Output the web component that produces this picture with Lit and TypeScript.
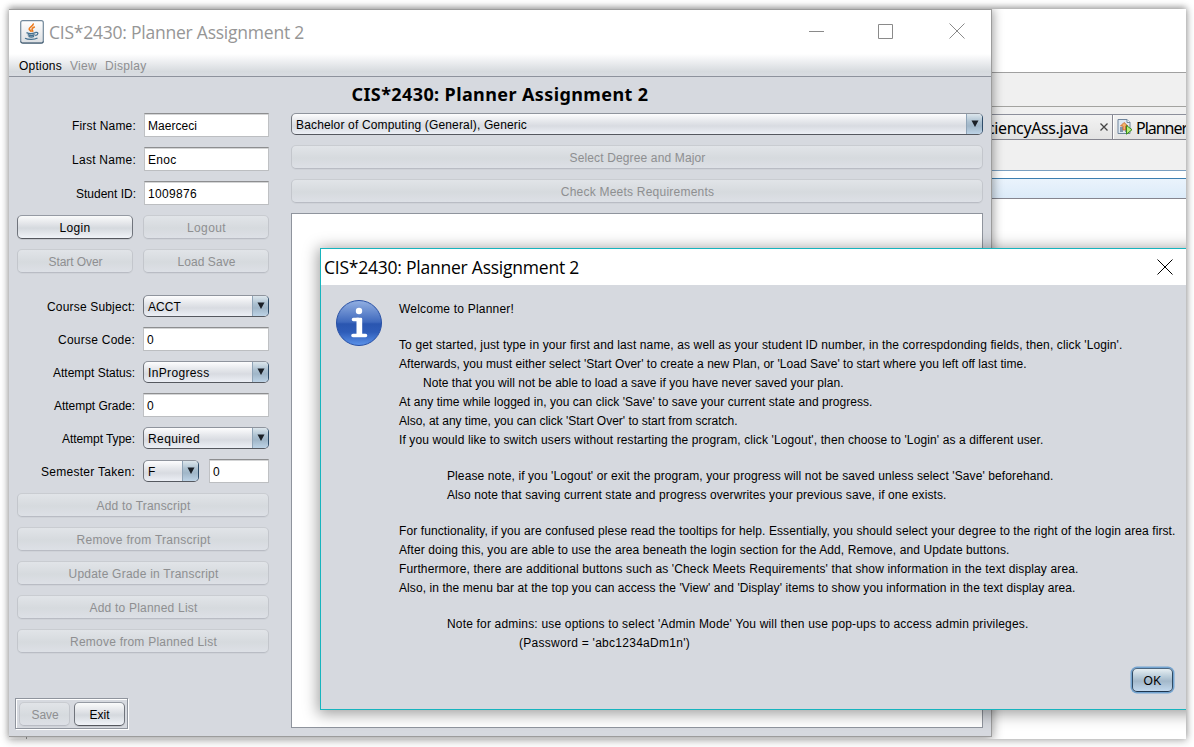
import { LitElement, html, css, svg } from "lit";
import { customElement, property } from "lit/decorators.js";

/** A single line of text spaced out so that it spans a given width. */
@customElement("fit-text")
class FitText extends LitElement {
  @property({ type: Number }) width = 0;
  @property() text = "";
  static styles = css`
    :host { display: inline-block; white-space: pre; }
    .line { display: inline-block; white-space: pre; }
  `;
  render() {
    return html`<span class="line">${this.text}</span>`;
  }
  updated() {
    const el = this.renderRoot.querySelector(".line") as HTMLElement;
    if (!this.width) return;
    el.style.letterSpacing = "0px";
    const natural = el.getBoundingClientRect().width;
    el.style.letterSpacing = (this.width - natural) / this.text.length + "px";
  }
}

@customElement("nimbus-button")
class NimbusButton extends LitElement {
  @property() label = "";
  @property({ type: Number }) width = 0;
  @property() kind = "off";
  static styles = css`
    :host { display: block; height: 24px; }
    .b {
      box-sizing: border-box; height: 24px; border-radius: 5px; border: 1px solid;
      display: flex; align-items: center; justify-content: center;
      font: 12px/22px "Liberation Sans", Arial, sans-serif; padding-top: 1px;
    }
    .off {
      color: #8e8f91; border-color: #c9ccd1 #c3c6cc #b9bcc4; padding-left: 1px;
      background: linear-gradient(#e1e4e8, #d6dade 55%, #dde0e6);
      box-shadow: 0 1px 0 #cfd2d8;
    }
    .on {
      color: #000; border-color: #959aa3 #70747c #55585f;
      background: linear-gradient(#fafbfb, #e3e5e9 35%, #d5d9de 55%, #f0f3f8);
      box-shadow: 0 1px 0 #c3c6cc;
    }
    .focus {
      color: #000; border-color: #4c6781 #2f4a63 #1d3650;
      background: linear-gradient(#e6eef2, #b9ccd9 35%, #a3b8ca 55%, #c2d8ed);
      box-shadow: 0 0 0 1.5px #73a4d1;
    }
  `;
  render() {
    return html`<div class="b ${this.kind}"><fit-text .width=${this.width} .text=${this.label}></fit-text></div>`;
  }
}

@customElement("nimbus-combo")
class NimbusCombo extends LitElement {
  @property() label = "";
  @property({ type: Number }) width = 0;
  static styles = css`
    :host { display: block; height: 22px; }
    .c {
      box-sizing: border-box; height: 22px; border-radius: 5px; border: 1px solid;
      border-color: #8f949d #2f4d6a #55585f #70747c; display: flex; overflow: hidden;
      background: linear-gradient(#fdfdfe, #e6e8ec 35%, #d8dbe1 60%, #eceff5);
      font: 12px/21px "Liberation Sans", Arial, sans-serif; color: #000;
    }
    .t { flex: 1; padding-left: 4px; padding-top: 1px; }
    .a {
      width: 16px; margin: -1px 0; display: flex; align-items: center; justify-content: center;
      border-left: 1px solid #8fa4b7; border-top: 1px solid #5f7890; border-bottom: 1px solid #2b445c; box-sizing: border-box;
      background: linear-gradient(#dce6ec, #abc0d0 40%, #a0b6c8 60%, #bdd3e6);
    }
    svg { display: block; }
  `;
  render() {
    return html`<div class="c"><div class="t"><fit-text .width=${this.width} .text=${this.label}></fit-text></div>
      <div class="a"><svg width="8" height="8" viewBox="0 0 8 8"><path d="M.5 .5h7L4 7z" fill="#1a1f26" /></svg></div></div>`;
  }
}

@customElement("nimbus-field")
class NimbusField extends LitElement {
  @property() value = "";
  @property({ type: Number }) width = 0;
  static styles = css`
    :host { display: block; height: 24px; }
    .f {
      box-sizing: border-box; height: 24px; background: #fff; padding-left: 3px;
      border: 1px solid; border-color: #8d8e90 #bfc1c4 #bcbec1;
      box-shadow: inset 0 1px 0 #d4d5d6;
      font: 12px/25px "Liberation Sans", Arial, sans-serif; color: #000;
    }
  `;
  render() {
    return html`<div class="f"><fit-text .width=${this.width} .text=${this.value}></fit-text></div>`;
  }
}

// [text, width, tab stops of 24px, space above]
const MESSAGE: [string, number, number, number][] = [
  ["Welcome to Planner!", 115, 0, 0],
  ["To get started, just type in your first and last name, as well as your student ID number, in the correspdonding fields, then, click 'Login'.", 723.5, 0, 17],
  ["Afterwards, you must either select 'Start Over' to create a new Plan, or 'Load Save' to start where you left off last time.", 627.5, 0, 0],
  ["Note that you will not be able to load a save if you have never saved your plan.", 420.5, 1, 0],
  ["At any time while logged in, you can click 'Save' to save your current state and progress.", 473.5, 0, 0],
  ["Also, at any time, you can click 'Start Over' to start from scratch.", 338.5, 0, 0],
  ["If you would like to switch users without restarting the program, click 'Logout', then choose to 'Login' as a different user.", 644.5, 0, 0],
  ["Please note, if you 'Logout' or exit the program, your progress will not be saved unless select 'Save' beforehand.", 606.5, 2, 17],
  ["Also note that saving current state and progress overwrites your previous save, if one exists.", 499.5, 2, 0],
  ["For functionality, if you are confused plese read the tooltips for help. Essentially, you should select your degree to the right of the login area first.", 776.5, 0, 17],
  ["After doing this, you are able to use the area beneath the login section for the Add, Remove, and Update buttons.", 610.5, 0, 0],
  ["Furthermore, there are additional buttons such as 'Check Meets Requirements' that show information in the text display area.", 679.5, 0, 0],
  ["Also, in the menu bar at the top you can access the 'View' and 'Display' items to show you information in the text display area.", 676.5, 0, 0],
  ["Note for admins: use options to select 'Admin Mode' You will then use pop-ups to access admin privileges.", 581.5, 2, 17],
  ["(Password = 'abc1234aDm1n')", 171, 5, 0],
];

const cross = (c: string) => svg`<path d="M.5 .5l15 15M15.5 .5l-15 15" stroke=${c} fill="none" />`;

@customElement("app-root")
class AppRoot extends LitElement {
  static styles = css`
    :host { display: block; width: 1194px; height: 747px; overflow: hidden; background: #fff;
      font: 12px/19px "Liberation Sans", Arial, sans-serif; color: #000; }
    .page { box-sizing: border-box; height: 747px; padding: 9px 8px 8px 9px; }
    .desk { position: relative; width: 1177px; height: 730px; background: #fff;
      box-shadow: 0 1px 8px 1px rgba(0,0,0,.26), 0 -2px 6px rgba(0,0,0,.26); }
    .clip { position: absolute; inset: 0; overflow: hidden; }

    .ide { margin-left: 982px; height: 730px; display: flex; flex-direction: column; background: #fff; }
    .ide-top { height: 63px; box-sizing: border-box; }
    .ide-bar { height: 35px; box-sizing: border-box; background: #f0f0f0; border-top: 1px solid #a0a0a0; border-bottom: 1px solid #a3a3a0; }
    .ide-gap { height: 7px; background: #f0f0f0; }
    .tabs { height: 26px; box-sizing: border-box; border-top: 1px solid #8c8f9b; border-bottom: 1px solid #85858f; display: flex;
      background: linear-gradient(#f3f3f3, #e3e3e3); font: 16px/27px "Noto Sans", Tahoma, sans-serif; overflow: hidden; }
    .tab1 { width: 122px; flex: none; box-sizing: border-box; border-right: 1px solid #85858f; display: flex; }
    .tab1 fit-text { margin-left: -4px; }
    .tab1 svg { margin: 8px 0 0 12px; flex: none; }
    .tab2 { display: flex; padding-left: 3px; border-left: 1px solid #fff; white-space: nowrap; }
    .tab2 svg { margin: 4px 3px 0 0; flex: none; }
    .ide-tools { height: 31px; background: #f0f0f0; border-bottom: 1px solid #7a9fc0; box-sizing: border-box; }
    .ide-space { height: 7px; }
    .ide-line { height: 21px; box-sizing: border-box; border-top: 1px solid #3c7fb1; border-bottom: 1px solid #85858f;
      background: linear-gradient(#eaf3fc, #dcebf9); }

    .win { position: absolute; left: 0; top: 0; width: 983px; height: 728px; box-sizing: border-box;
      background: #d6d9df; border: 1px solid #9c9c9c; border-left: 0; display: flex; flex-direction: column;
      box-shadow: 0 1px 10px 1px rgba(0,0,0,.4); }
    .title { height: 44px; background: #fff; display: flex; align-items: center; color: #969696;
      font: 17.5px/44px "Open Sans", "Segoe UI", sans-serif; padding-left: 11px; }
    .title .name { margin-left: 5px; flex: 1; }
    .ctl { display: flex; gap: 54px; padding: 0 26px 2px 0; align-items: center; }
    .ctl .x { margin-left: 2px; }
    .ctl svg, .dt svg { display: block; }
    .menu { height: 23px; box-sizing: border-box; border-bottom: 1px solid #8d929c; display: flex; gap: 8px; padding: 2px 0 0 10px;
      background: linear-gradient(#fff, #f2f3f5 25%, #d6dade 80%, #d9dce2); line-height: 20px; }
    .dim { color: #8e8f91; }
    .body { flex: 1; display: flex; min-height: 0; }
    .left { width: 260px; box-sizing: border-box; padding: 31px 0 0 6px; margin-right: 22px; }
    .row { height: 34px; box-sizing: border-box; padding: 5px 0 0 2px; display: flex; }
    .row .lab { width: 119px; text-align: right; line-height: 27px; margin-right: 8px; }
    .row nimbus-field, .grow { flex: 1; }
    .b1 { width: 116px; margin-right: 10px; }
    .rows2 { margin-top: 12px; }
    .rows2 .row { height: 33px; padding-top: 4px; }
    .rows2 .row .lab { width: 118px; line-height: 27px; }
    .rows2 nimbus-combo { margin-top: 1px; flex: 1; }
    .rows2 .sem nimbus-combo { flex: none; width: 56px; margin-right: 10px; }
    .save { margin: 40px 0 0 0; width: 113px; height: 31px; box-sizing: border-box; border: 1px solid #8f949d;
      box-shadow: inset 1px 1px 0 #fff, 1px 1px 0 #fff; display: flex; gap: 4px; padding: 3px 2px 0 3px; }
    .save nimbus-button { width: 51px; }

    .right { flex: 1; margin-right: 8px; display: flex; flex-direction: column; padding-bottom: 8px; }
    .head { height: 36px; text-align: center; font: bold 18px/35px "Noto Sans", Tahoma, sans-serif; margin-right: 274px; }
    .right nimbus-button { margin-top: 10px; }
    .area { margin-top: 10px; flex: 1; border: 1px solid #8f949d; background: #fff; }

    .dialog { position: absolute; left: 311px; top: 239px; width: 880px; height: 462px; box-sizing: border-box;
      border: 1px solid #17b4be; background: #d6d9df; box-shadow: 0 2px 14px 2px rgba(0,0,0,.38); }
    .dt { height: 36px; background: #fff; display: flex; align-items: center; font: 17.5px/38px "Open Sans", "Segoe UI", sans-serif; padding-left: 3px; }
    .dt svg { margin-left: auto; margin-right: 26px; }
    .db { display: flex; padding: 14px 0 0 14px; }
    .db > svg { flex: none; margin-right: 16px; }
    .msg { display: flex; flex-direction: column; white-space: nowrap; padding-top: 1px; line-height: 19px; }
    .line { height: 19px; }
    .foot { display: flex; justify-content: flex-end; margin-right: 26px; margin-top: 15px; }
    .foot nimbus-button { width: 41px; }
    .tick { position: absolute; left: 17px; top: 728px; width: 1px; height: 2px; background: #777; }
  `;

  field(label: string, lw: number, value: string, vw: number) {
    return html`<div class="row"><div class="lab"><fit-text .width=${lw} .text=${label}></fit-text></div>
      <nimbus-field .value=${value} .width=${vw}></nimbus-field></div>`;
  }
  combo(label: string, lw: number, value: string, vw: number) {
    return html`<div class="row"><div class="lab"><fit-text .width=${lw} .text=${label}></fit-text></div>
      <nimbus-combo .label=${value} .width=${vw}></nimbus-combo></div>`;
  }
  wide(label: string, w: number) {
    return html`<div class="row"><nimbus-button class="grow" .label=${label} .width=${w}></nimbus-button></div>`;
  }

  render() {
    return html`<div class="page"><div class="desk"><div class="clip">
      <div class="ide">
        <div class="ide-top"></div>
        <div class="ide-bar"></div>
        <div class="ide-gap"></div>
        <div class="tabs">
          <div class="tab1"><fit-text .width=${101} text="ciencyAss.java"></fit-text>
            <svg width="8" height="8" viewBox="0 0 8 8"><path d="M.5 .5l7 7M7.5 .5l-7 7" stroke="#444" stroke-width="1.3" /></svg></div>
          <div class="tab2">
            <svg width="16" height="16" viewBox="0 0 16 16">
              <path d="M1 .5h9l3 3v11H1z" fill="#dfe9f3" stroke="#70859c" />
              <path d="M10 .5v3h3" fill="#fff" stroke="#70859c" />
              <path d="M3 8h3v5H3zM8 8h3v5H8z" fill="#8196ad" />
              <path d="M7 3.5L3.5 7H6v4h2.5V7H11z" fill="#f3b56a" stroke="#c55f2c" stroke-width=".8" />
              <path d="M9.5 6.5l5.5 4.2-5.500 4.500z" fill="#b9f07a" stroke="#358a1a" />
            </svg><fit-text .width=${51} text="Planner"></fit-text></div>
        </div>
        <div class="ide-tools"></div>
        <div class="ide-space"></div>
        <div class="ide-line"></div>
      </div>

      <div class="win">
        <div class="title">
          <svg width="24" height="24" viewBox="0 0 24 24">
            <defs><linearGradient id="j" x2="0" y2="1"><stop stop-color="#fff" /><stop offset="1" stop-color="#dcdfe2" /></linearGradient></defs>
            <rect x=".7" y=".7" width="22.600" height="22.300" rx="2" fill="url(#j)" stroke="#71889b" stroke-width="1.2" />
            <path d="M.7 21.500q0 1.600 1.800 1.600h19q1.800 0 1.800-1.600" fill="none" stroke="#3c5468" />
            <path d="M13 3.500c1.300 2.200-4 3.500-3.800 5.500.2 1.200 1.800 1.500 2 2.800M14.800 6.800c-1.500.7-2.800 1.500-2.800 2.500 0 .9 1.200 1.300.5 2.500" fill="none" stroke="#ec7a1c" stroke-width="1.600" />
            <path d="M6.500 12.700c2 .9 6.500.9 9 0M7.700 14.600c2 .9 5 .9 7 0M8.500 16.400c1.600.7 4 .7 5.600 0M5 18.200c3 1.600 9.500 1.600 12.500-.2M15.500 12.400c3.400-.8 3 2.600-.3 3.100" fill="none" stroke="#44708f" stroke-width="1.300" />
          </svg>
          <div class="name"><fit-text .width=${255} text="CIS*2430: Planner Assignment 2"></fit-text></div>
          <div class="ctl">
            <svg width="15" height="15"><path d="M0 7.500h15" stroke="#8a8a8a" /></svg>
            <svg width="15" height="15"><path d="M.5 .5h14v14h-14z" stroke="#8a8a8a" fill="none" /></svg>
            <svg class="x" width="16" height="16">${cross("#8a8a8a")}</svg>
          </div>
        </div>
        <div class="menu">
          <fit-text .width=${43} text="Options"></fit-text>
          <fit-text class="dim" .width=${27} text="View"></fit-text>
          <fit-text class="dim" .width=${41.5} text="Display"></fit-text>
        </div>
        <div class="body">
          <div class="left">
            ${this.field("First Name:", 64, "Maerceci", 49)}
            ${this.field("Last Name:", 64, "Enoc", 28.5)}
            ${this.field("Student ID:", 60, "1009876", 49)}
            <div class="row"><nimbus-button class="b1" kind="on" label="Login" .width=${31}></nimbus-button>
              <nimbus-button class="grow" label="Logout" .width=${39}></nimbus-button></div>
            <div class="row"><nimbus-button class="b1" label="Start Over" .width=${54}></nimbus-button>
              <nimbus-button class="grow" label="Load Save" .width=${58}></nimbus-button></div>
            <div class="rows2">
              ${this.combo("Course Subject:", 88, "ACCT", 33)}
              ${this.field("Course Code:", 77, "0", 7)}
              ${this.combo("Attempt Status:", 82, "InProgress", 61.5)}
              ${this.field("Attempt Grade:", 81, "0", 7)}
              ${this.combo("Attempt Type:", 73, "Required", 52)}
              <div class="row sem"><div class="lab"><fit-text .width=${94} text="Semester Taken:"></fit-text></div>
                <nimbus-combo label="F" .width=${7}></nimbus-combo><nimbus-field value="0" .width=${7}></nimbus-field></div>
            </div>
            ${this.wide("Add to Transcript", 94)}
            ${this.wide("Remove from Transcript", 134)}
            ${this.wide("Update Grade in Transcript", 150)}
            ${this.wide("Add to Planned List", 108)}
            ${this.wide("Remove from Planned List", 147)}
            <div class="save"><nimbus-button label="Save" .width=${27}></nimbus-button><nimbus-button kind="on" label="Exit" .width=${20}></nimbus-button></div>
          </div>
          <div class="right">
            <div class="head"><fit-text .width=${297} text="CIS*2430: Planner Assignment 2"></fit-text></div>
            <nimbus-combo label="Bachelor of Computing (General), Generic" .width=${231}></nimbus-combo>
            <nimbus-button label="Select Degree and Major" .width=${136}></nimbus-button>
            <nimbus-button label="Check Meets Requirements" .width=${153.5}></nimbus-button>
            <div class="area"></div>
          </div>
        </div>
      </div>
      <div class="tick"></div>

      <div class="dialog">
        <div class="dt"><fit-text .width=${255} text="CIS*2430: Planner Assignment 2"></fit-text>
          <svg width="16" height="16">${cross("#000")}</svg></div>
        <div class="db">
          <svg width="48" height="48" viewBox="0 0 48 48">
            <defs><linearGradient id="g" x2="0" y2="1"><stop stop-color="#93b0e2" /><stop offset=".48" stop-color="#3f69bd" /><stop offset=".52" stop-color="#2a56b0" /><stop offset=".7" stop-color="#2e5cb8" /><stop offset="1" stop-color="#5c93ea" /></linearGradient></defs>
            <circle cx="24" cy="24" r="22.500" fill="url(#g)" stroke="#2850a5" />
            <circle cx="24" cy="12" r="3.200" fill="#fff" />
            <path d="M18.500 20.500h5M18 36.500h12.500" stroke="#fff" stroke-width="3.600" stroke-linecap="round" fill="none" />
            <path d="M21.500 18.700h4.500q1.200 0 1.200 1.200v16.600h-5.700z" fill="#fff" />
          </svg>
          <div class="msg">
            ${MESSAGE.map(([t, w, tab, gap]) => html`<div class="line" style="padding-left:${tab * 24}px;margin-top:${gap}px"><fit-text .width=${w} .text=${t}></fit-text></div>`)}
          </div>
        </div>
        <div class="foot"><nimbus-button kind="focus" label="OK" .width=${18}></nimbus-button></div>
      </div>
    </div></div></div>`;
  }
}
